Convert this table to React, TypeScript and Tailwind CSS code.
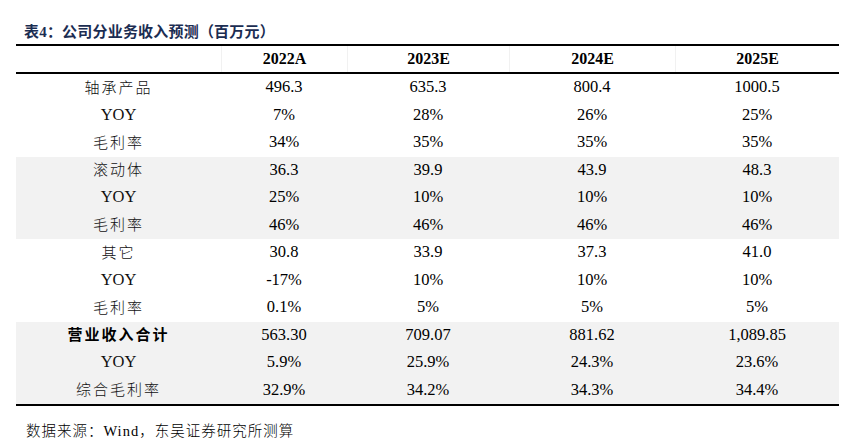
const rows: { label: string; vals: string[]; bold?: boolean; gray?: boolean }[] = [
  { label: "轴承产品", vals: ["496.3", "635.3", "800.4", "1000.5"] },
  { label: "YOY", vals: ["7%", "28%", "26%", "25%"] },
  { label: "毛利率", vals: ["34%", "35%", "35%", "35%"] },
  { label: "滚动体", vals: ["36.3", "39.9", "43.9", "48.3"], gray: true },
  { label: "YOY", vals: ["25%", "10%", "10%", "10%"], gray: true },
  { label: "毛利率", vals: ["46%", "46%", "46%", "46%"], gray: true },
  { label: "其它", vals: ["30.8", "33.9", "37.3", "41.0"] },
  { label: "YOY", vals: ["-17%", "10%", "10%", "10%"] },
  { label: "毛利率", vals: ["0.1%", "5%", "5%", "5%"] },
  { label: "营业收入合计", vals: ["563.30", "709.07", "881.62", "1,089.85"], bold: true, gray: true },
  { label: "YOY", vals: ["5.9%", "25.9%", "24.3%", "23.6%"], gray: true },
  { label: "综合毛利率", vals: ["32.9%", "34.2%", "34.3%", "34.4%"], gray: true },
];

const years = ["2022A", "2023E", "2024E", "2025E"];

const cols = "grid grid-cols-[205px_126px_162px_166px_164px]";

export default function App() {
  return (
    <div className="w-[862px] h-[444px] overflow-hidden bg-white text-black font-['Liberation_Serif','Noto_Sans_CJK_SC',serif] pt-[22px]">
      {/* title */}
      <div className="pl-[24px] h-[20px] flex items-center text-[15px] tracking-[0.2px] font-bold text-[#1b2d52]">
        表4：公司分业务收入预测（百万元）
      </div>

      {/* table */}
      <div className="ml-[16px] mt-[2px] w-[823px] border-t-2 border-b-2 border-black">
        <div className={`${cols} h-[28px] border-b-2 border-black`}>
          <div />
          {years.map((y) => (
            <div key={y} className="flex items-center justify-center text-[16px] font-bold border-l border-[#f1f1f1]">
              {y}
            </div>
          ))}
        </div>
        {rows.map((r, i) => (
          <div key={i} className={`${cols} h-[27.5px] ${r.gray ? "bg-[#f2f2f2]" : ""}`}>
            <div
              className={`flex items-center justify-center text-[15px] ${
                r.label === "YOY" ? "text-[16.5px]" : "tracking-[2px]"
              } ${r.bold ? "font-bold" : "font-light text-[#111]"}`}
            >
              {r.label}
            </div>
            {r.vals.map((v, j) => (
              <div key={j} className="flex items-center justify-center text-[16.5px]">
                {v}
              </div>
            ))}
          </div>
        ))}
      </div>

      {/* source */}
      <div className="pl-[26px] mt-[16px] h-[20px] flex items-center text-[14.5px] tracking-[1px] font-light">
        数据来源：Wind，东吴证券研究所测算
      </div>
    </div>
  );
}
